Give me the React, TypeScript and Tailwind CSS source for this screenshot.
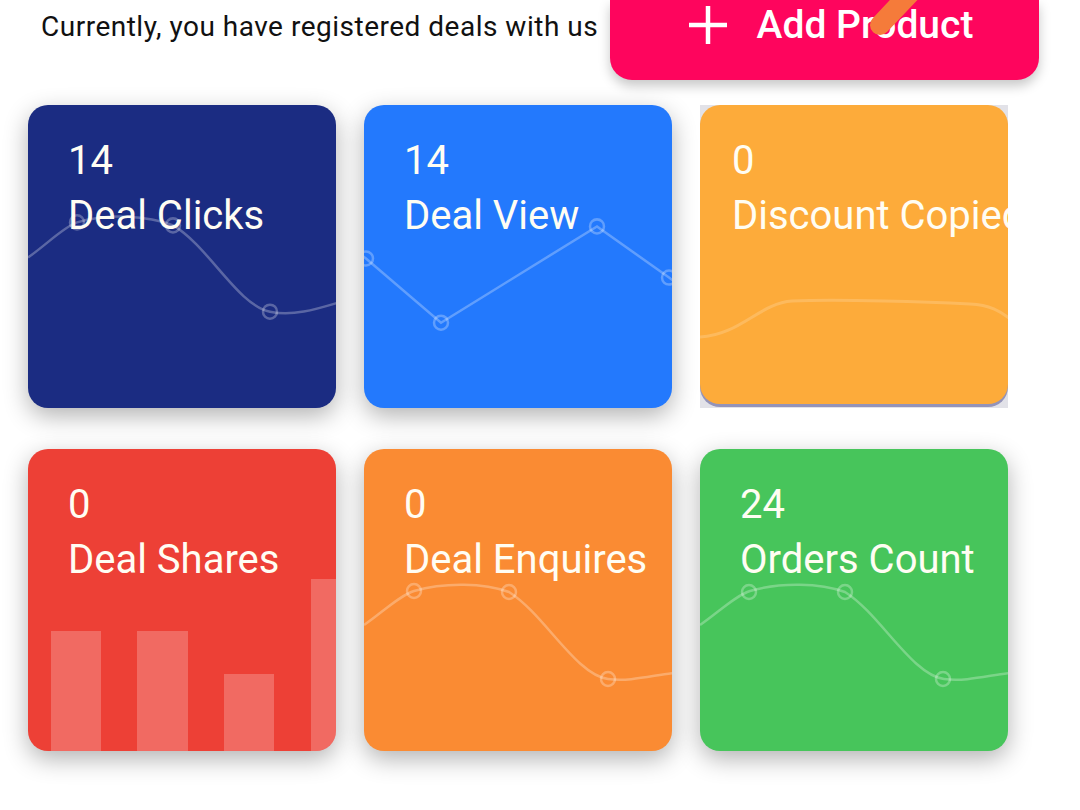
import React from "react";

const curveA =
  "M 0 152 C 20 138, 35 122, 49 117 C 80 108, 120 110, 145 120 C 180 140, 210 200, 242 206 C 265 211, 290 203, 310 197";
const curveB =
  "M 0 176 C 20 162, 35 147, 50 142 C 81 133, 120 134, 145 143 C 180 165, 212 226, 244 230 C 266 233, 290 226, 310 224";

function SmoothChart({ path, pts }: { path: string; pts: [number, number][] }) {
  return (
    <svg className="absolute inset-0 w-full h-full" viewBox="0 0 308 302" preserveAspectRatio="none">
      <path d={path} fill="none" stroke="rgba(255,255,255,0.28)" strokeWidth="2.5" />
      {pts.map(([x, y], i) => (
        <circle key={i} cx={x} cy={y} r="7" fill="none" stroke="rgba(255,255,255,0.28)" strokeWidth="2.5" />
      ))}
    </svg>
  );
}

function LineChart() {
  const pts: [number, number][] = [
    [2, 153],
    [77, 217],
    [233, 121],
    [305, 172],
  ];
  return (
    <svg className="absolute inset-0 w-full h-full" viewBox="0 0 308 302" preserveAspectRatio="none">
      <polyline
        points="-20 137 2 153 77 217 233 121 305 172 330 190"
        fill="none"
        stroke="rgba(255,255,255,0.28)"
        strokeWidth="2.5"
      />
      {pts.map(([x, y], i) => (
        <circle key={i} cx={x} cy={y} r="7" fill="none" stroke="rgba(255,255,255,0.28)" strokeWidth="2.5" />
      ))}
    </svg>
  );
}

function PlateauChart() {
  return (
    <svg className="absolute inset-0 w-full h-full" viewBox="0 0 308 299" preserveAspectRatio="none">
      <path
        d="M 0 232 C 40 230, 60 198, 92 196 C 140 194, 230 197, 270 199 C 290 200, 300 206, 310 214"
        fill="none"
        stroke="rgba(255,255,255,0.18)"
        strokeWidth="3"
      />
    </svg>
  );
}

function BarChart() {
  return (
    <svg className="absolute inset-0 w-full h-full" viewBox="0 0 308 302" preserveAspectRatio="none">
      <rect x="23" y="182" width="50" height="130" fill="rgba(255,255,255,0.22)" />
      <rect x="109" y="182" width="51" height="130" fill="rgba(255,255,255,0.22)" />
      <rect x="196" y="225" width="50" height="90" fill="rgba(255,255,255,0.22)" />
      <rect x="283" y="130" width="50" height="190" fill="rgba(255,255,255,0.22)" />
    </svg>
  );
}

function CardText({ value, label, pad }: { value: string; label: string; pad: string }) {
  return (
    <div className={`relative ${pad} pt-[28px] text-[40px] leading-[55px] text-[#fffdf3] whitespace-nowrap`}>
      <div>{value}</div>
      <div>{label}</div>
    </div>
  );
}

export default function App() {
  return (
    <div
      className="w-[1080px] h-[810px] bg-white overflow-hidden"
      style={{ fontFamily: "Roboto, 'Noto Sans', sans-serif" }}
    >
      <div className="flex items-start h-[80px]">
        <div className="pl-[41px] pt-[10px] text-[28px] leading-[34px] text-[#111] whitespace-nowrap tracking-[0.5px]">
          Currently, you have registered deals with us
        </div>
        <div className="ml-auto mr-[41px] relative w-[429px] h-[80px] rounded-b-[22px] bg-[#fe055d] shadow-[0_6px_12px_rgba(0,0,0,0.22)] overflow-hidden">
          <div className="flex items-center justify-center h-[50px] gap-[29px] pl-[12px]">
            <svg width="40" height="40" viewBox="0 0 40 40">
              <path d="M20 1 V39 M1 20 H39" stroke="white" strokeWidth="4.5" />
            </svg>
            <span className="text-[39px] font-medium text-white leading-none">Add Product</span>
          </div>
          <svg className="absolute left-0 top-0" width="429" height="80" viewBox="0 0 429 80">
            <line x1="270" y1="25" x2="305" y2="-12" stroke="#f57b3a" strokeWidth="20" strokeLinecap="round" />
          </svg>
        </div>
      </div>

      <div className="grid grid-cols-[308px_308px_308px] gap-x-[28px] gap-y-[41px] pl-[28px] mt-[25px]">
        <div className="relative h-[303px] rounded-[20px] bg-[#1b2c82] overflow-hidden shadow-[0_8px_24px_rgba(0,0,0,0.3)]">
          <SmoothChart
            path={curveA}
            pts={[
              [49, 117],
              [145, 120],
              [242, 206],
            ]}
          />
          <CardText value="14" label="Deal Clicks" pad="pl-[40px]" />
        </div>

        <div className="relative h-[303px] rounded-[20px] bg-[#2379fd] overflow-hidden shadow-[0_8px_24px_rgba(0,0,0,0.3)]">
          <LineChart />
          <CardText value="14" label="Deal View" pad="pl-[40px]" />
        </div>

        <div className="h-[303px] bg-[#e2e2e8]">
          <div className="relative h-[299px] rounded-[20px] bg-[#fdab3a] overflow-hidden shadow-[0_3px_0_rgba(120,120,170,0.75)]">
            <PlateauChart />
            <CardText value="0" label="Discount Copied" pad="pl-[32px]" />
          </div>
        </div>

        <div className="relative h-[302px] rounded-[20px] bg-[#ed4036] overflow-hidden shadow-[0_8px_24px_rgba(0,0,0,0.3)]">
          <BarChart />
          <CardText value="0" label="Deal Shares" pad="pl-[40px]" />
        </div>

        <div className="relative h-[302px] rounded-[20px] bg-[#fa8b33] overflow-hidden shadow-[0_8px_24px_rgba(0,0,0,0.3)]">
          <SmoothChart
            path={curveB}
            pts={[
              [50, 142],
              [145, 143],
              [244, 230],
            ]}
          />
          <CardText value="0" label="Deal Enquires" pad="pl-[40px]" />
        </div>

        <div className="relative h-[302px] rounded-[20px] bg-[#47c55b] overflow-hidden shadow-[0_8px_24px_rgba(0,0,0,0.3)]">
          <SmoothChart
            path={curveB}
            pts={[
              [49, 143],
              [145, 143],
              [243, 230],
            ]}
          />
          <CardText value="24" label="Orders Count" pad="pl-[40px]" />
        </div>
      </div>
    </div>
  );
}
